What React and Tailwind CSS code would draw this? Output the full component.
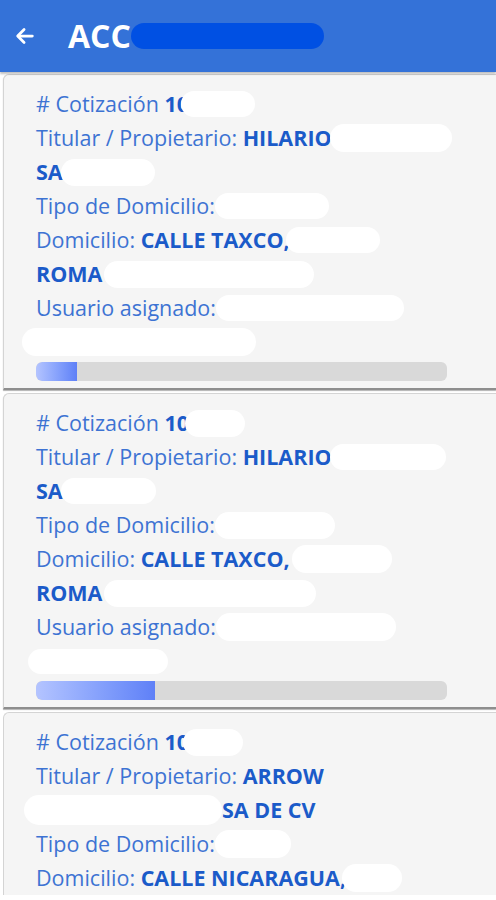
import { useState } from "react"

const Blot = ({ w, h = 26, className = "" }) => (
    <span
        className={`inline-block align-middle bg-white rounded-full ${className}`}
        style={{ width: w, height: h }}
    ></span>
)

const Line = ({ children }) => (
    <div className="h-[34px] flex items-center whitespace-nowrap">{children}</div>
)

const Label = ({ children }) => <span className="text-[#3d73d3]">{children}</span>
const Value = ({ children }) => <span className="font-bold text-[#1b5bc9]">{children}</span>

const Progress = ({ pct }) => (
    <div className="mt-[3px] h-[19px] w-[411px] rounded-md bg-[#d9d9d9] overflow-hidden">
        <div
            className="h-full rounded-l-md bg-gradient-to-r from-[#b4c4ff] to-[#5f80f7]"
            style={{ width: `${pct}%` }}
        ></div>
    </div>
)

const Card = ({ children, pct, last }) => (
    <div className={`ml-[3px] rounded-tl-md border-l border-t border-[#d4d4d4] bg-[#f5f5f5] pl-[32px] pt-[12px] ${last ? "" : "pb-[7px] border-b-2 border-b-[#8e8e8e] shadow-[0_1px_1px_rgba(0,0,0,0.3)] mb-[3px]"}`}>
        {children}
        {pct !== undefined ? <Progress pct={pct} /> : null}
    </div>
)

const App = () => {
    const [cards] = useState([1, 2, 3])
    return (
        <div className="w-[496px] h-[900px] overflow-hidden bg-white" style={{ fontFamily: '"Open Sans", "Noto Sans", sans-serif' }}>
            <div className="relative z-10 h-[72px] bg-[#3472d8] flex items-center shadow-[0_2px_2px_rgba(0,0,0,0.25)]">
                <svg className="ml-[14px]" width="22" height="22" viewBox="0 0 24 24" fill="none" stroke="white" strokeWidth="3" strokeLinecap="round" strokeLinejoin="round">
                    <path d="M20 12H5" />
                    <path d="M11 5l-7 7 7 7" />
                </svg>
                <span className="ml-[32px] text-white font-bold text-[32px] leading-none">ACC</span>
                <span className="ml-[0px] inline-block h-[26px] w-[193px] rounded-full bg-[#0050e3]"></span>
            </div>

            <div className="pt-[2px] text-[21.5px]">
                <Card pct={10}>
                    <Line><Label>#&nbsp;Cotización&nbsp;</Label><Value>10</Value><Blot w={74} className="-ml-[8px]" /></Line>
                    <Line><Label>Titular / Propietario:&nbsp;</Label><Value>HILARIO</Value><Blot w={122} h={28} className="-ml-[2px]" /></Line>
                    <Line><Value>SA</Value><Blot w={94} h={27} className="ml-[-2px]" /></Line>
                    <Line><Label>Tipo de Domicilio:</Label><Blot w={114} /></Line>
                    <Line><Label>Domicilio:&nbsp;</Label><Value>CALLE TAXCO,</Value><Blot w={94} className="-ml-[4px]" /></Line>
                    <Line><Value>ROMA</Value><Blot w={210} h={27} className="ml-[2px]" /></Line>
                    <Line><Label>Usuario asignado:</Label><Blot w={188} /></Line>
                    <Line><Blot w={234} h={28} className="-ml-[14px]" /></Line>
                </Card>
                <Card pct={29}>
                    <Line><Label>#&nbsp;Cotización&nbsp;</Label><Value>10</Value><Blot w={60} h={27} className="-ml-[4px]" /></Line>
                    <Line><Label>Titular / Propietario:&nbsp;</Label><Value>HILARIO</Value><Blot w={116} className="-ml-[2px]" /></Line>
                    <Line><Value>SA</Value><Blot w={95} className="ml-[-2px]" /></Line>
                    <Line><Label>Tipo de Domicilio:</Label><Blot w={120} h={27} /></Line>
                    <Line><Label>Domicilio:&nbsp;</Label><Value>CALLE TAXCO,</Value><Blot w={100} h={28} className="ml-[2px]" /></Line>
                    <Line><Value>ROMA</Value><Blot w={212} h={27} className="ml-[2px]" /></Line>
                    <Line><Label>Usuario asignado:</Label><Blot w={180} h={28} /></Line>
                    <Line><Blot w={140} h={25} className="-ml-[8px]" /></Line>
                </Card>
                <Card last>
                    <Line><Label>#&nbsp;Cotización&nbsp;</Label><Value>10</Value><Blot w={60} h={27} className="-ml-[6px]" /></Line>
                    <Line><Label>Titular / Propietario:&nbsp;</Label><Value>ARROW</Value></Line>
                    <Line><Blot w={198} h={30} className="-ml-[12px]" /><Value>SA DE CV</Value></Line>
                    <Line><Label>Tipo de Domicilio:</Label><Blot w={76} h={28} /></Line>
                    <Line><Label>Domicilio:&nbsp;</Label><Value>CALLE NICARAGUA,</Value><Blot w={60} h={28} className="-ml-[4px]" /></Line>
                </Card>
            </div>
        </div>
    )
}

export default App
